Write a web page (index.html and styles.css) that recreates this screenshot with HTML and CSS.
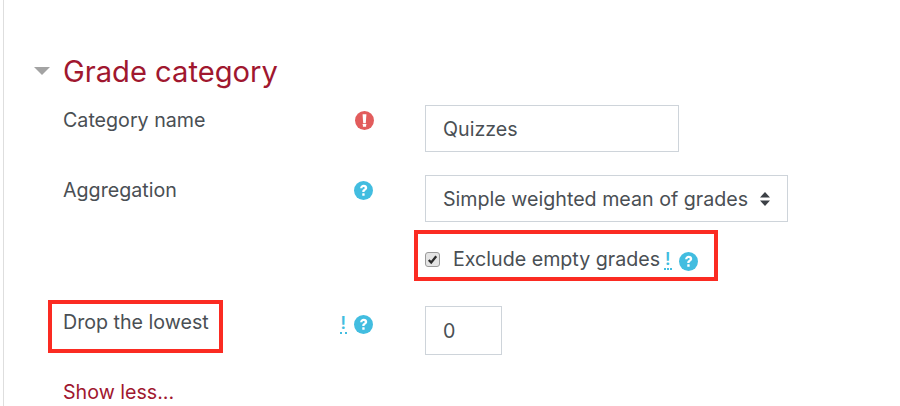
FILE: index.html
```html
<!DOCTYPE html>
<html>
<head>
  <title>Grade category</title>
  <link rel="stylesheet" href="styles.css">
</head>
<body>
  <div class="page">
    <div class="section-head">
      <span class="caret"></span>
      <h2>Grade category</h2>
    </div>

    <div class="row row-name">
      <div class="label">Category name</div>
      <div class="icons">
        <svg class="icon icon-error" viewBox="0 0 20 20"><circle cx="10" cy="10" r="10" fill="#e25c5c"/><path d="M8 3.500h4l-.6 9H8.600z" fill="#fff"/><rect x="8.300" y="13.500" width="3.400" height="3.200" rx=".5" fill="#fff"/></svg>
      </div>
      <div class="control"><div class="field field-name">Quizzes</div></div>
    </div>

    <div class="row row-agg">
      <div class="label">Aggregation</div>
      <div class="icons">
        <svg class="icon" viewBox="0 0 20 20"><use href="#help"/></svg>
      </div>
      <div class="control">
        <div class="field field-select">
          <span>Simple weighted mean of grades</span>
          <svg class="updown" viewBox="0 0 12 14"><path d="M6 0l5 5.500H1zM6 14L1 8.500h10z" fill="#3c4146"/></svg>
        </div>
      </div>
    </div>

    <div class="row row-check">
      <div class="label"></div>
      <div class="icons"></div>
      <div class="control check-line">
        <span class="checkbox">
          <svg viewBox="0 0 14 14"><path d="M3 7.500l2.600 2.800L11 3.500" fill="none" stroke="#2b2b2b" stroke-width="2.400"/></svg>
        </span>
        <span class="check-text">Exclude empty grades</span>
        <span class="adv">!</span>
        <svg class="icon" viewBox="0 0 20 20"><use href="#help"/></svg>
        <div class="callout callout-check"></div>
      </div>
    </div>

    <div class="row row-drop">
      <div class="label">
        Drop the lowest
        <div class="callout callout-drop"></div>
      </div>
      <div class="icons">
        <span class="adv">!</span>
        <svg class="icon" viewBox="0 0 20 20"><use href="#help"/></svg>
      </div>
      <div class="control"><div class="field field-num">0</div></div>
    </div>

    <a class="show-less" href="#">Show less...</a>
  </div>

  <svg class="defs" width="0" height="0">
    <symbol id="help" viewBox="0 0 20 20">
      <circle cx="10" cy="10" r="10" fill="#42bde0"/>
      <path d="M6.400 7.600C6.600 5.300 8.200 4 10.200 4c2.200 0 3.700 1.300 3.700 3.200 0 1.400-.8 2.200-1.800 2.800-.8.500-1 .8-1 1.600H8.700c0-1.400.3-2.100 1.400-2.800.8-.5 1.200-.9 1.200-1.500 0-.6-.5-1-1.200-1-.8 0-1.200.5-1.300 1.200z" fill="#fff"/>
      <rect x="8.700" y="12.800" width="2.500" height="2.800" rx=".4" fill="#fff"/>
    </symbol>
  </svg>
</body>
</html>
```

FILE: styles.css
```css
html, body {
  margin: 0;
  padding: 0;
  height: 406px;
  overflow: hidden;
}
body {
  font-family: 'Inter', 'Liberation Sans', sans-serif;
  font-size: 19.650px;
  color: #4a4f54;
  background: #fff;
}
.page {
  margin-left: 3px;
  height: 406px;
  border-left: 1px solid #dedede;
  padding: 52px 0 0 59px;
  box-sizing: border-box;
}
.section-head {
  display: flex;
  align-items: center;
  height: 38px;
  margin-left: -29px;
}
.section-head h2 {
  margin: 0;
  font-size: 29.150px;
  font-weight: normal;
  color: #a0172f;
}
.caret {
  width: 0;
  height: 0;
  border-left: 8px solid transparent;
  border-right: 8px solid transparent;
  border-top: 8px solid #a3a3a3;
  margin-right: 13px;
}
.row {
  display: flex;
  align-items: flex-start;
}
.row-name { margin-top: 15px; }
.row-agg { margin-top: 23px; }
.row-check { margin-top: 26px; }
.row-drop { margin-top: 33px; }
.label {
  position: relative;
  width: 270px;
  padding-top: 4px;
  line-height: 22px;
}
.row-drop .label { padding-top: 5px; }
.icons {
  width: 40px;
  height: 20px;
  padding-top: 5px;
  display: flex;
  align-items: center;
  justify-content: flex-end;
  gap: 7px;
}
.row-drop .icons { padding-top: 8px; }
.icon {
  width: 19px;
  height: 19px;
  flex: none;
}
.icon-error { margin-right: -1px; }
.control {
  margin-left: 52px;
  position: relative;
}
.field {
  box-sizing: border-box;
  height: 47px;
  border: 1px solid #ced4da;
  display: flex;
  align-items: center;
  padding-left: 17px;
  line-height: 22px;
}
.field-name { width: 254px; }
.field-select {
  width: 363px;
  justify-content: space-between;
  padding-right: 16px;
}
.field-num { width: 77px; height: 49px; }
.updown {
  width: 12px;
  height: 14px;
}
.check-line {
  display: flex;
  align-items: center;
  height: 22px;
}
.check-line .icon { margin-top: 4px; }
.checkbox {
  box-sizing: border-box;
  width: 15px;
  height: 15px;
  border: 1px solid #9a9a9a;
  border-radius: 3px;
  background: #e4e4e4;
  display: flex;
}
.check-text {
  margin-left: 13px;
  line-height: 22px;
}
.adv {
  color: #42bde0;
  font-weight: 600;
  font-size: 17px;
  line-height: 17px;
  border-bottom: 2px dotted #42bde0;
  margin-left: 4px;
  margin-right: 7px;
  margin-top: 2px;
  padding: 0 1px;
}
.icons .adv {
  margin: 0;
}
.callout {
  position: absolute;
  box-sizing: border-box;
  border: 4px solid #fb2b22;
}
.callout-check {
  left: -11px;
  top: -18px;
  width: 304px;
  height: 51px;
}
.callout-drop {
  left: -15px;
  top: -6px;
  width: 175px;
  height: 53px;
}
.show-less {
  display: block;
  margin-top: 26px;
  color: #a0172f;
  text-decoration: none;
  line-height: 22px;
}
.defs {
  position: absolute;
}
```
